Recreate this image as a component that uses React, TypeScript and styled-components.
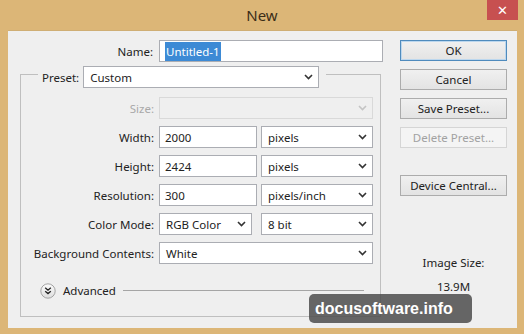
import React from "react";
import styled, { createGlobalStyle } from "styled-components";

const GlobalStyle = createGlobalStyle`
	html, body {
		margin: 0;
		padding: 0;
		background: #dcb677;
	}
	* {
		box-sizing: border-box;
	}
`;

const Window = styled.div`
	position: relative;
	width: 524px;
	height: 334px;
	background: #dcb677;
	font-family: "Noto Sans", "DejaVu Sans", sans-serif;
	font-size: 11.5px;
	color: #222;
	display: flex;
	flex-direction: column;
	overflow: hidden;
`;

const TitleBar = styled.div`
	height: 30px;
	display: grid;
	grid-template-columns: 1fr auto 1fr;
	align-items: start;
`;

const Title = styled.div`
	font-size: 15px;
	line-height: 30px;
	color: #3b2d17;
`;

const CloseButton = styled.div`
	justify-self: end;
	margin-right: 6px;
	width: 31px;
	height: 20px;
	background: #c75050;
	color: #fff;
	display: flex;
	align-items: center;
	justify-content: center;
	font-family: "DejaVu Sans", sans-serif;
	font-size: 13px;
	font-weight: bold;
`;

const Body = styled.div`
	margin: 0 7px 6px 8px;
	flex: 1;
	background: #efefef;
	border-top: 1px solid #cfae74;
	display: flex;
	padding-top: 8px;
`;

const LeftColumn = styled.div`
	width: 375px;
	display: flex;
	flex-direction: column;
`;

const NameRow = styled.div`
	margin-top: 1px;
	display: grid;
	grid-template-columns: 145px 224px;
	column-gap: 6px;
	align-items: center;
`;

const Label = styled.div<{ $disabled?: boolean }>`
	text-align: right;
	white-space: nowrap;
	color: ${({ $disabled }) => ($disabled ? "#a9a9a9" : "#222")};
`;

const TextBox = styled.div<{ $width?: number }>`
	width: ${({ $width }) => ($width ? `${$width}px` : "100%")};
	height: 22px;
	background: #fff;
	border: 1px solid #abadb3;
	display: flex;
	align-items: center;
	padding-left: 5px;
	white-space: nowrap;
`;

const Selected = styled.span`
	background: #3d8ad5;
	color: #fff;
	padding: 1px 1px;
	line-height: 17px;
`;

const SelectBox = styled.div<{ $width?: number; $disabled?: boolean }>`
	width: ${({ $width }) => ($width ? `${$width}px` : "100%")};
	height: 22px;
	background: ${({ $disabled }) => ($disabled ? "#efefef" : "#fff")};
	border: 1px solid ${({ $disabled }) => ($disabled ? "#d9d9d9" : "#abadb3")};
	display: flex;
	align-items: center;
	justify-content: space-between;
	padding: 0 5px 0 6px;
	white-space: nowrap;
	color: ${({ $disabled }) => ($disabled ? "#c8c8c8" : "#222")};
`;

const GroupBox = styled.fieldset`
	margin: -2px 0 0 12px;
	padding: 0;
	width: 361px;
	border: 1px solid #bfbfbf;
	min-width: 0;
`;

const Legend = styled.legend`
	margin-left: 17px;
	padding: 6px 7px 0 4px;
	display: flex;
	align-items: center;
	gap: 4px;
`;

const Fields = styled.div`
	padding: 9px 0 0 0;
	display: grid;
	grid-template-columns: 133px 214px;
	column-gap: 5px;
	row-gap: 7px;
	align-items: center;
`;

const FieldPair = styled.div`
	display: flex;
	justify-content: space-between;
`;

const AdvancedRow = styled.div`
	margin: 19px 16px 18px 19px;
	height: 15px;
	display: flex;
	align-items: center;
	gap: 7px;
`;

const AdvancedLine = styled.div`
	flex: 1;
	height: 1px;
	background: #a5a5a5;
`;

const RightColumn = styled.div`
	margin-left: 17px;
	width: 107px;
	display: flex;
	flex-direction: column;
	align-items: center;
`;

const Button = styled.div<{ $default?: boolean; $disabled?: boolean; $gap?: number }>`
	width: 107px;
	height: 21px;
	margin-top: ${({ $gap }) => $gap ?? 8}px;
	display: flex;
	align-items: center;
	justify-content: center;
	background: ${({ $disabled }) =>
		$disabled ? "#f4f4f4" : "linear-gradient(#f0f0f0, #e3e3e3)"};
	border: 1px solid
		${({ $default, $disabled }) =>
			$default ? "#4f8bbd" : $disabled ? "#d5d5d5" : "#acacac"};
	box-shadow: ${({ $default }) => ($default ? "inset 0 0 0 1px #bcd7ee" : "none")};
	color: ${({ $disabled }) => ($disabled ? "#a2a2a2" : "#222")};
	white-space: nowrap;
`;

const InfoText = styled.div<{ $gap: number }>`
	margin-top: ${({ $gap }) => $gap}px;
	line-height: 16px;
`;

const Watermark = styled.div`
	position: absolute;
	left: 309px;
	top: 294px;
	width: 163px;
	height: 29px;
	border-radius: 5px;
	background: rgba(78, 78, 78, 0.86);
	color: #fff;
	font-family: "Liberation Sans", Arial, sans-serif;
	font-weight: bold;
	font-size: 16px;
	display: flex;
	align-items: center;
	padding-left: 6px;
`;

const Chevron = ({ light }: { light?: boolean }) => (
	<svg width="9" height="6" viewBox="0 0 9 6">
		<path
			d="M1 1 L4.5 4.5 L8 1"
			fill="none"
			stroke={light ? "#c4c4c4" : "#333"}
			strokeWidth="1.6"
		/>
	</svg>
);

const AdvancedIcon = () => (
	<svg width="16" height="16" viewBox="0 0 16 16">
		<defs>
			<linearGradient id="adv" x1="0" y1="0" x2="0" y2="1">
				<stop offset="0" stopColor="#fbfbfb" />
				<stop offset="1" stopColor="#dedede" />
			</linearGradient>
		</defs>
		<circle cx="8" cy="8" r="7.2" fill="url(#adv)" stroke="#a3a3a3" />
		<path
			d="M5.2 4.8 L8 7.2 L10.8 4.8 M5.2 8.2 L8 10.6 L10.8 8.2"
			fill="none"
			stroke="#222"
			strokeWidth="1.3"
		/>
	</svg>
);

type Row = {
	label: string;
	field: React.ReactNode;
	disabled?: boolean;
};

const rows: Row[] = [
	{
		label: "Size:",
		disabled: true,
		field: (
			<SelectBox $disabled>
				<span />
				<Chevron light />
			</SelectBox>
		),
	},
	{
		label: "Width:",
		field: (
			<FieldPair>
				<TextBox $width={98}>2000</TextBox>
				<SelectBox $width={112}>
					pixels
					<Chevron />
				</SelectBox>
			</FieldPair>
		),
	},
	{
		label: "Height:",
		field: (
			<FieldPair>
				<TextBox $width={98}>2424</TextBox>
				<SelectBox $width={112}>
					pixels
					<Chevron />
				</SelectBox>
			</FieldPair>
		),
	},
	{
		label: "Resolution:",
		field: (
			<FieldPair>
				<TextBox $width={98}>300</TextBox>
				<SelectBox $width={112}>
					pixels/inch
					<Chevron />
				</SelectBox>
			</FieldPair>
		),
	},
	{
		label: "Color Mode:",
		field: (
			<FieldPair>
				<SelectBox $width={93}>
					RGB Color
					<Chevron />
				</SelectBox>
				<SelectBox $width={112}>
					8 bit
					<Chevron />
				</SelectBox>
			</FieldPair>
		),
	},
	{
		label: "Background Contents:",
		field: (
			<SelectBox>
				White
				<Chevron />
			</SelectBox>
		),
	},
];

export default function App() {
	return (
		<Window>
			<GlobalStyle />
			<TitleBar>
				<span />
				<Title>New</Title>
				<CloseButton>✕</CloseButton>
			</TitleBar>
			<Body>
				<LeftColumn>
					<NameRow>
						<Label>Name:</Label>
						<TextBox>
							<Selected>Untitled-1</Selected>
						</TextBox>
					</NameRow>
					<GroupBox>
						<Legend>
							<span>Preset:</span>
							<SelectBox $width={236}>
								Custom
								<Chevron />
							</SelectBox>
						</Legend>
						<Fields>
							{rows.map((row) => (
								<React.Fragment key={row.label}>
									<Label $disabled={row.disabled}>{row.label}</Label>
									{row.field}
								</React.Fragment>
							))}
						</Fields>
						<AdvancedRow>
							<AdvancedIcon />
							<span>Advanced</span>
							<AdvancedLine />
						</AdvancedRow>
					</GroupBox>
				</LeftColumn>
				<RightColumn>
					<Button $default $gap={1}>OK</Button>
					<Button>Cancel</Button>
					<Button>Save Preset...</Button>
					<Button $disabled>Delete Preset...</Button>
					<Button $gap={27}>Device Central...</Button>
					<InfoText $gap={59}>Image Size:</InfoText>
					<InfoText $gap={8}>13.9M</InfoText>
				</RightColumn>
			</Body>
			<Watermark>docusoftware.info</Watermark>
		</Window>
	);
}
